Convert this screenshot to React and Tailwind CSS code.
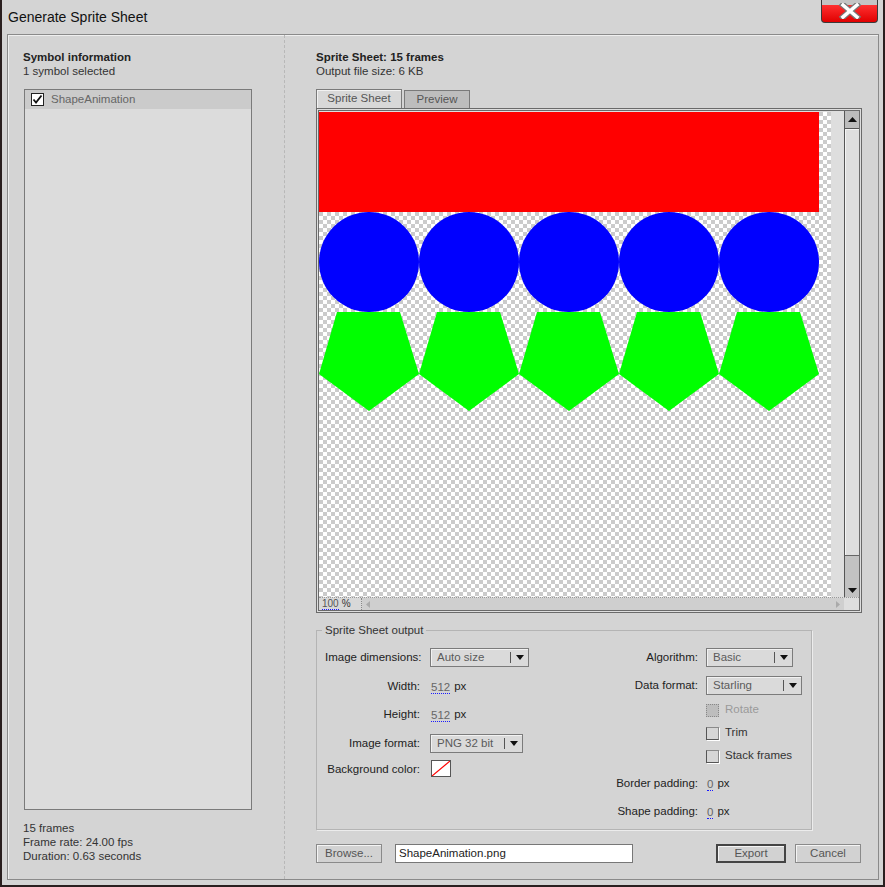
import React from "react";

function Dropdown({ value, w }) {
  return (
    <div className={`h-[19px] ${w} border border-[#7b7b7b] bg-[#dadada] flex items-center text-[#5a5a5a] shadow-[inset_1px_1px_0_#f2f2f2]`}>
      <span className="flex-1 pl-[6px] leading-[17px]">{value}</span>
      <span className="w-px h-[11px] bg-[#555]" />
      <span className="w-[17px] flex justify-center">
        <svg width="8" height="5" viewBox="0 0 8 5"><path d="M0 0h8L4 5z" fill="#111" /></svg>
      </span>
    </div>
  );
}

function Num({ v }) {
  return (
    <span className="flex items-center gap-[4px]">
      <span className="text-[#666] border-b border-dotted border-[#1a1aff] leading-[12px]">{v}</span>
      <span className="text-[#222]">px</span>
    </span>
  );
}

function Check({ label, disabled }) {
  return (
    <div className="h-[18px] flex items-center gap-[6px]">
      {disabled ? (
        <span className="w-[13px] h-[13px] border border-dotted border-[#888] bg-[#bdbdbd]" />
      ) : (
        <span className="w-[13px] h-[13px] border border-[#555] border-t-[#8a8a8a] border-r-[#8a8a8a] bg-[#d6d6d6] shadow-[1px_1px_0_#fff]" />
      )}
      <span className={disabled ? "text-[#9a9a9a]" : "text-[#333]"}>{label}</span>
    </div>
  );
}

function Btn({ children, w, def }) {
  return (
    <button
      className={`h-[19px] ${w} ${def ? "border-2 border-[#444]" : "border border-[#8a8a8a]"} bg-[#d2d2d2] text-[#555] shadow-[inset_1px_1px_0_#f4f4f4] leading-[15px] flex items-center justify-center`}
    >
      {children}
    </button>
  );
}

export default function App() {
  const checker =
    "bg-[conic-gradient(#cbcbcb_25%,#ffffff_0_50%,#cbcbcb_0_75%,#ffffff_0)] bg-[length:8px_8px]";
  return (
    <div className="w-[885px] h-[887px] bg-[#d4d4d4] border-x-2 border-b-2 border-[#2a1f1f] flex flex-col font-['Liberation_Sans',Arial,sans-serif] text-[11.5px] text-[#222] whitespace-nowrap overflow-hidden">
      {/* Title bar */}
      <div className="h-[34px] flex items-start justify-between shrink-0">
        <div className="pl-[6px] pt-[8px] text-[14px] leading-[18px] text-[#111]">Generate Sprite Sheet</div>
        <div className="mr-[5px] w-[57px] h-[23px] rounded-b-[4px] border border-t-0 border-[#3a3a3a] bg-[linear-gradient(#c4c4c4_0,#c4c4c4_5px,#ff3030_5px,#e00000_100%)] flex items-center justify-center">
          <svg width="26" height="16" viewBox="0 0 26 16">
            <path d="M6 2L20 14M20 2L6 14" stroke="#777" strokeWidth="6" strokeLinecap="square" />
            <path d="M6 2L20 14M20 2L6 14" stroke="#fff" strokeWidth="3.5" strokeLinecap="square" />
          </svg>
        </div>
      </div>

      {/* Main panel */}
      <div className="ml-[5px] mr-[4px] mb-[5px] flex-1 border border-[#8a8a8a] shadow-[inset_1px_1px_0_#efefef] flex">
        {/* Left column */}
        <div className="w-[277px] shrink-0 border-r border-dashed border-[#b8b8b8] flex flex-col pl-[15px] pt-[15px]">
          <div className="font-bold leading-[14px]">Symbol information</div>
          <div className="leading-[14px] text-[#333]">1 symbol selected</div>
          <div className="mt-[11px] ml-[1px] w-[228px] h-[721px] border border-[#7a7a7a] bg-[#dcdcdc]">
            <div className="h-[19px] bg-[#cbcbcb] flex items-center pl-[6px] gap-[7px]">
              <span className="w-[13px] h-[13px] border border-[#222] bg-white flex items-center justify-center">
                <svg width="11" height="11" viewBox="0 0 11 11">
                  <path d="M1.5 5.5L4 8.5L9.5 1.5" stroke="#111" strokeWidth="1.8" fill="none" />
                </svg>
              </span>
              <span className="text-[#666]">ShapeAnimation</span>
            </div>
          </div>
          <div className="mt-[11px] leading-[14px] text-[#333]">
            <div>15 frames</div>
            <div>Frame rate: 24.00 fps</div>
            <div>Duration: 0.63 seconds</div>
          </div>
        </div>

        {/* Right column */}
        <div className="flex-1 flex flex-col pl-[31px] pt-[15px]">
          <div className="font-bold leading-[14px]">Sprite Sheet: 15 frames</div>
          <div className="leading-[14px] text-[#333]">Output file size: 6 KB</div>

          {/* Tabs */}
          <div className="mt-[11px] flex items-end gap-[2px] h-[19px]">
            <div className="w-[86px] h-[19px] border border-b-0 border-[#7a7a7a] bg-[#d8d8d8] shadow-[inset_1px_1px_0_#f2f2f2] flex items-center justify-center text-[#555]">
              Sprite Sheet
            </div>
            <div className="w-[66px] h-[18px] border border-b-0 border-[#7a7a7a] bg-[#bdbdbd] flex items-center justify-center text-[#555]">
              Preview
            </div>
          </div>

          {/* Preview box */}
          <div className="w-[546px] h-[505px] border border-[#6a6a6a] p-px bg-[#dedede]">
            <div className="w-full h-full border border-[#6a6a6a] flex flex-col">
              <div className="flex-1 flex min-h-0">
                <div className="flex-1 flex min-w-0 pt-[1px]">
                  <div className={`w-[512px] h-full ${checker}`}>
                    <svg width="500" height="300" viewBox="0 0 500 300" className="block">
                      <rect x="0" y="0" width="500" height="100" fill="#ff0000" />
                      {[0, 1, 2, 3, 4].map((i) => (
                        <circle key={"c" + i} cx={i * 100 + 50} cy="150" r="50" fill="#0000ff" />
                      ))}
                      {[0, 1, 2, 3, 4].map((i) => (
                        <polygon
                          key={"p" + i}
                          transform={`translate(${i * 100},200)`}
                          points="18,0 81,0 100,62 50,99 0,62"
                          fill="#00ff00"
                        />
                      ))}
                    </svg>
                  </div>
                </div>
                {/* Vertical scrollbar */}
                <div className="w-[15px] flex flex-col border-l border-[#555]">
                  <div className="h-[18px] bg-[#bcbcbc] border-b border-[#555] flex items-center justify-center">
                    <svg width="9" height="5" viewBox="0 0 9 5"><path d="M0 5h9L4.5 0z" fill="#111" /></svg>
                  </div>
                  <div className="flex-1 bg-[#dedede] border-b border-[#666] shadow-[inset_1px_1px_0_#f4f4f4]" />
                  <div className="h-[41px] bg-[#c2c2c2] flex items-end justify-center pb-[4px]">
                    <svg width="9" height="5" viewBox="0 0 9 5"><path d="M0 0h9L4.5 5z" fill="#111" /></svg>
                  </div>
                </div>
              </div>
              {/* Bottom bar */}
              <div className="h-[13px] flex border-t border-dotted border-[#999]">
                <div className="w-[43px] bg-[#d8d8d8] flex items-center pl-[3px] text-[10px] leading-[10px] text-[#555] gap-[3px] border-r border-dotted border-[#888]">
                  <span className="border-b border-dotted border-[#1a1aff]">100</span>
                  <span className="text-[#333]">%</span>
                </div>
                <div className="flex-1 bg-[#cfcfcf] flex items-center justify-between px-[4px]">
                  <svg width="4" height="7" viewBox="0 0 4 7"><path d="M4 0v7L0 3.5z" fill="#aaa" /></svg>
                  <svg width="4" height="7" viewBox="0 0 4 7"><path d="M0 0v7L4 3.5z" fill="#aaa" /></svg>
                </div>
                <div className="w-[15px] bg-[#dedede]" />
              </div>
            </div>
          </div>

          {/* Fieldset */}
          <fieldset className="mt-[10px] w-[496px] h-[207px] border border-[#b4b4b4] shadow-[1px_1px_0_#ececec]">
            <legend className="ml-[5px] px-[3px] leading-[14px] text-[#333]">Sprite Sheet output</legend>
            <div className="flex pt-[11px]">
              {/* Left group */}
              <div className="w-[282px] pl-[8px] flex flex-col">
                <div className="h-[19px] flex items-center">
                  <span className="w-[95px] shrink-0 text-right">Image dimensions:</span>
                  <span className="ml-[10px]"><Dropdown value="Auto size" w="w-[99px]" /></span>
                </div>
                <div className="h-[18px] mt-[11px] flex items-center">
                  <span className="w-[95px] shrink-0 text-right">Width:</span>
                  <span className="ml-[11px]"><Num v="512" /></span>
                </div>
                <div className="h-[18px] mt-[10px] flex items-center">
                  <span className="w-[95px] shrink-0 text-right">Height:</span>
                  <span className="ml-[11px]"><Num v="512" /></span>
                </div>
                <div className="h-[19px] mt-[10px] flex items-center">
                  <span className="w-[95px] shrink-0 text-right">Image format:</span>
                  <span className="ml-[10px]"><Dropdown value="PNG 32 bit" w="w-[93px]" /></span>
                </div>
                <div className="h-[18px] mt-[7px] flex items-start">
                  <span className="w-[95px] shrink-0 text-right leading-[14px] mt-[2px]">Background color:</span>
                  <span className="ml-[11px] w-[20px] h-[17px] border border-[#555] bg-white">
                    <svg width="18" height="15" viewBox="0 0 18 15" className="block">
                      <path d="M0 15L18 0" stroke="#ff0000" strokeWidth="1.2" />
                    </svg>
                  </span>
                </div>
              </div>
              {/* Right group */}
              <div className="flex flex-col">
                <div className="h-[19px] flex items-center">
                  <span className="w-[99px] shrink-0 text-right">Algorithm:</span>
                  <span className="ml-[8px]"><Dropdown value="Basic" w="w-[87px]" /></span>
                </div>
                <div className="h-[19px] mt-[9px] flex items-center">
                  <span className="w-[99px] shrink-0 text-right">Data format:</span>
                  <span className="ml-[8px]"><Dropdown value="Starling" w="w-[96px]" /></span>
                </div>
                <div className="ml-[107px] mt-[6px]"><Check label="Rotate" disabled /></div>
                <div className="ml-[107px] mt-[5px]"><Check label="Trim" /></div>
                <div className="ml-[107px] mt-[5px]"><Check label="Stack frames" /></div>
                <div className="h-[18px] mt-[10px] flex items-center">
                  <span className="w-[99px] shrink-0 text-right">Border padding:</span>
                  <span className="ml-[9px]"><Num v="0" /></span>
                </div>
                <div className="h-[18px] mt-[10px] flex items-center">
                  <span className="w-[99px] shrink-0 text-right">Shape padding:</span>
                  <span className="ml-[9px]"><Num v="0" /></span>
                </div>
              </div>
            </div>
          </fieldset>

          {/* Buttons */}
          <div className="mt-[14px] w-[545px] flex items-center">
            <Btn w="w-[66px]">Browse...</Btn>
            <div className="ml-[13px] w-[238px] h-[19px] border border-[#777] bg-white flex items-center pl-[3px] text-[#222]">
              ShapeAnimation.png
            </div>
            <div className="flex-1" />
            <Btn w="w-[70px]" def>Export</Btn>
            <span className="ml-[9px]"><Btn w="w-[66px]">Cancel</Btn></span>
          </div>
        </div>
      </div>
    </div>
  );
}
